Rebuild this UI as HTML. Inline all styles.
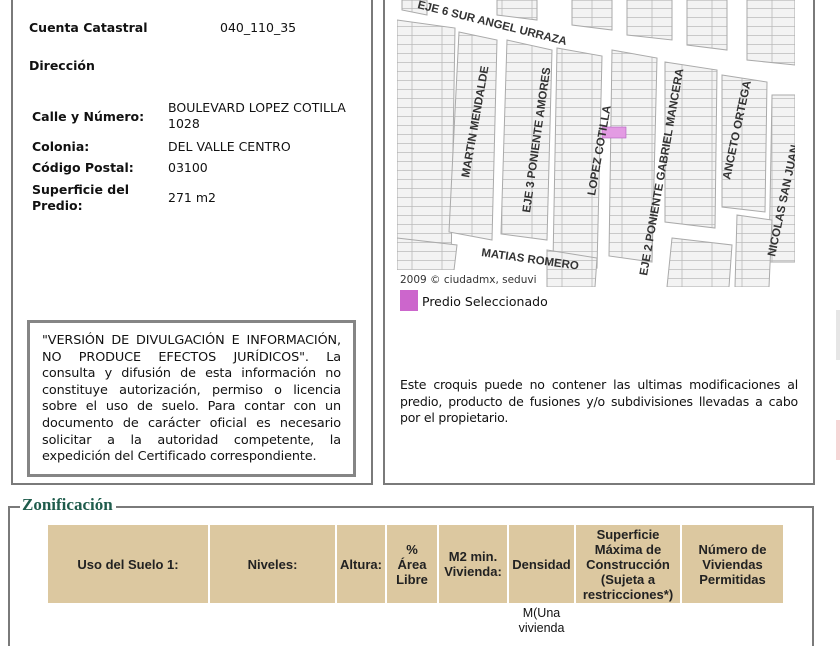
<!DOCTYPE html>
<html><head><meta charset="utf-8"><style>
body{margin:0;width:840px;height:630px;overflow:hidden;background:#fff;font-family:"DejaVu Sans",Verdana,sans-serif;font-size:12px;color:#111;position:relative}
.a{position:absolute}
.b{font-weight:bold}
.box{position:absolute;border:2px solid #7a7a7a;box-sizing:border-box}
th{background:#dcc8a0;font-family:"Liberation Sans",sans-serif;font-weight:bold;font-size:13px;color:#222;padding:0;line-height:15px}
</style></head><body>
<div class="box" style="left:11px;top:-4px;width:362px;height:489px"></div>
<div class="box" style="left:383px;top:-4px;width:432px;height:489px"></div>
<div class="a" style="left:836px;top:310px;width:4px;height:50px;background:#e6e6e6"></div>
<div class="a" style="left:836px;top:420px;width:4px;height:40px;background:#f6d6d6"></div>

<div class="a b" style="left:29px;top:20px;font-size:12.5px">Cuenta Catastral</div>
<div class="a" style="left:220px;top:20px;font-size:12.5px">040_110_35</div>
<div class="a b" style="left:29px;top:58px;font-size:12.5px">Dirección</div>
<div class="a b" style="left:32px;top:109px;font-size:12.5px">Calle y Número:</div>
<div class="a" style="left:168px;top:100px;line-height:16px;font-size:12.5px">BOULEVARD LOPEZ COTILLA<br>1028</div>
<div class="a b" style="left:32px;top:139px;font-size:12.5px">Colonia:</div>
<div class="a" style="left:168px;top:139px;font-size:12.5px">DEL VALLE CENTRO</div>
<div class="a b" style="left:32px;top:160px;font-size:12.5px">Código Postal:</div>
<div class="a" style="left:168px;top:160px;font-size:12.5px">03100</div>
<div class="a b" style="left:32px;top:182px;line-height:16px;font-size:12.5px">Superficie del<br>Predio:</div>
<div class="a" style="left:168px;top:190px;font-size:12.5px">271 m2</div>

<div class="a" style="left:27px;top:320px;width:329px;height:157px;border:3px solid #858585;box-sizing:border-box"></div>
<div class="a" style="left:42px;top:333px;width:299px;line-height:16.6px;text-align:justify;font-size:12.8px;letter-spacing:-0.1px">"VERSIÓN DE DIVULGACIÓN E INFORMACIÓN, NO PRODUCE EFECTOS JURÍDICOS". La consulta y difusión de esta información no constituye autorización, permiso o licencia sobre el uso de suelo. Para contar con un documento de carácter oficial es necesario solicitar a la autoridad competente, la expedición del Certificado correspondiente.</div>

<svg class="a" style="left:397px;top:0" width="398" height="287" viewBox="0 0 398 287">
<defs><pattern id="p" width="30" height="9" patternUnits="userSpaceOnUse"><rect width="30" height="9" fill="#f3f3f3"/><path d="M0 8.5H30M15 0V9" stroke="#bbb" stroke-width="0.8"/></pattern></defs>
<rect width="398" height="287" fill="#fff"/>
<g stroke="#aaa" stroke-width="1" fill="url(#p)">
<polygon points="0,20 58,28 54,268 0,262"/>
<polygon points="62,32 100,40 95,240 52,232"/>
<polygon points="110,40 155,50 150,240 104,234"/>
<polygon points="160,48 205,56 200,268 156,262"/>
<polygon points="215,50 260,58 255,262 212,256"/>
<polygon points="268,62 320,70 318,228 268,222"/>
<polygon points="325,75 370,82 368,212 325,207"/>
<polygon points="375,95 398,95 398,262 372,262"/>
<polygon points="275,238 335,245 332,287 270,287"/>
<polygon points="340,215 375,220 372,287 338,287"/>
<polygon points="0,238 60,245 55,287 0,287"/>
<polygon points="150,250 200,258 198,287 150,287"/>
<polygon points="5,0 30,0 30,15 5,10"/>
<polygon points="100,0 140,0 140,20 100,15"/>
<polygon points="175,0 215,0 215,30 175,25"/>
<polygon points="230,0 275,0 275,40 230,35"/>
<polygon points="290,0 330,0 330,50 290,45"/>
<polygon points="350,0 398,0 398,65 350,60"/>
</g>
<rect x="205" y="127" width="24" height="11" fill="#e39be3" stroke="#b060c0" stroke-width="0.6"/>
<g font-family="Liberation Sans,sans-serif" font-weight="bold" font-size="11.5" fill="#333">
<text x="20" y="8" transform="rotate(14 20 8)">EJE 6 SUR ANGEL URRAZA</text>
<text x="72" y="178" transform="rotate(-80 72 178)">MARTIN MENDALDE</text>
<text x="133" y="213" transform="rotate(-82 133 213)">EJE 3 PONIENTE AMORES</text>
<text x="198" y="196" transform="rotate(-80 198 196)">LOPEZ COTILLA</text>
<text x="250" y="276" transform="rotate(-80 250 276)">EJE 2 PONIENTE GABRIEL MANCERA</text>
<text x="333" y="180" transform="rotate(-78 333 180)">ANCETO ORTEGA</text>
<text x="378" y="257" transform="rotate(-78 378 257)">NICOLAS SAN JUAN</text>
<text x="84" y="256" transform="rotate(8 84 256)">MATIAS ROMERO</text>
</g>
<rect x="0" y="270" width="120" height="17" fill="#fff"/>
<text x="3" y="283" font-family="DejaVu Sans,sans-serif" font-size="10.5" fill="#333">2009 © ciudadmx, seduvi</text>
</svg>
<div class="a" style="left:400px;top:290px;width:18px;height:21px;background:#cc66cc"></div>
<div class="a" style="left:422px;top:294px;font-size:12.5px">Predio Seleccionado</div>
<div class="a" style="left:400px;top:377px;width:398px;line-height:16.5px;text-align:justify;font-size:12.5px;letter-spacing:-0.2px">Este croquis puede no contener las ultimas modificaciones al predio, producto de fusiones y/o subdivisiones llevadas a cabo por el propietario.</div>

<div class="a" style="left:8px;top:506px;width:806px;height:140px;border:2px solid #7a7a7a;border-bottom:none;box-sizing:border-box"></div>
<div class="a" style="left:20px;top:495px;background:#fff;padding:0 3px 0 2px;font-family:'Liberation Serif',serif;font-weight:bold;font-size:17px;color:#1f5c4c">Zonificación</div>

<table class="a" style="left:46px;top:525px;border-collapse:separate;border-spacing:2px 0;text-align:center">
<tr style="height:78px">
<th style="width:160px">Uso del Suelo 1:</th>
<th style="width:125px">Niveles:</th>
<th style="width:48px">Altura:</th>
<th style="width:50px">%<br>Área<br>Libre</th>
<th style="width:68px">M2 min.<br>Vivienda:</th>
<th style="width:65px">Densidad</th>
<th style="width:104px">Superficie<br>Máxima de<br>Construcción<br>(Sujeta a<br>restricciones*)</th>
<th style="width:101px">Número de<br>Viviendas<br>Permitidas</th>
</tr></table>
<div class="a" style="left:508px;top:606px;width:67px;text-align:center;font-family:'Liberation Sans',sans-serif;font-size:12.5px;line-height:15px">M(Una<br>vivienda</div>
</body></html>
